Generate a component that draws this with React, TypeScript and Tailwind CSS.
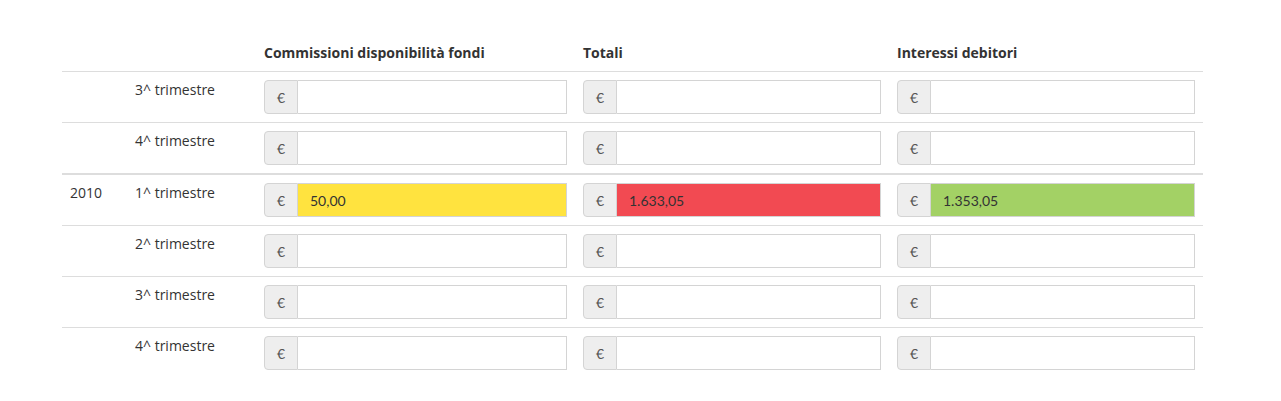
import React from "react";

type Row = { year?: string; label: string; values?: [string, string, string]; thick?: boolean };

const rows: Row[] = [
  { label: "3^ trimestre" },
  { label: "4^ trimestre" },
  { year: "2010", label: "1^ trimestre", values: ["50,00", "1.633,05", "1.353,05"], thick: true },
  { label: "2^ trimestre" },
  { label: "3^ trimestre" },
  { label: "4^ trimestre" },
];

const bgs = ["bg-[#ffe33f]", "bg-[#f24a52]", "bg-[#a3d165]"];

function EuroInput({ value, bg }: { value?: string; bg: string }) {
  return (
    <div className="flex h-[34px] w-full">
      <span className="flex w-[34px] shrink-0 items-center justify-center rounded-l-[4px] border border-[#d4d4d4] bg-[#eeeeee] text-[14px] text-[#555] [font-family:Lato,'Open_Sans',sans-serif]">
        €
      </span>
      <div
        className={`flex flex-1 items-center border border-l-0 border-[#d4d4d4] px-3 text-[14px] text-[#333] [font-family:Lato,sans-serif] ${value ? bg : "bg-white"}`}
      >
        {value}
      </div>
    </div>
  );
}

export default function App() {
  return (
    <div className="min-h-[401px] bg-white pt-[35px] text-[14px] text-[#333] [font-family:'Open_Sans',sans-serif]">
      <table className="ml-[62px] w-[1141px] table-fixed border-collapse">
        <colgroup>
          <col className="w-[65px]" />
          <col className="w-[129px]" />
          <col className="w-[319px]" />
          <col className="w-[314px]" />
          <col className="w-[314px]" />
        </colgroup>
        <thead>
          <tr className="border-b border-[#dddddd]">
            <th className="p-2 leading-[20px]"></th>
            <th className="p-2 leading-[20px]"></th>
            <th className="p-2 text-left font-bold leading-[20px]">Commissioni disponibilità fondi</th>
            <th className="p-2 text-left font-bold leading-[20px]">Totali</th>
            <th className="p-2 text-left font-bold leading-[20px]">Interessi debitori</th>
          </tr>
        </thead>
        <tbody>
          {rows.map((r, i) => (
            <tr
              key={i}
              className={
                i === 0 ? "" : r.thick ? "border-t-2 border-[#dddddd]" : "border-t border-[#dddddd]"
              }
            >
              <td className="p-2 align-top leading-[20px]">{r.year}</td>
              <td className="p-2 align-top leading-[20px]">{r.label}</td>
              {[0, 1, 2].map((c) => (
                <td key={c} className="p-2 align-top">
                  <EuroInput value={r.values?.[c]} bg={bgs[c]} />
                </td>
              ))}
            </tr>
          ))}
        </tbody>
      </table>
    </div>
  );
}
